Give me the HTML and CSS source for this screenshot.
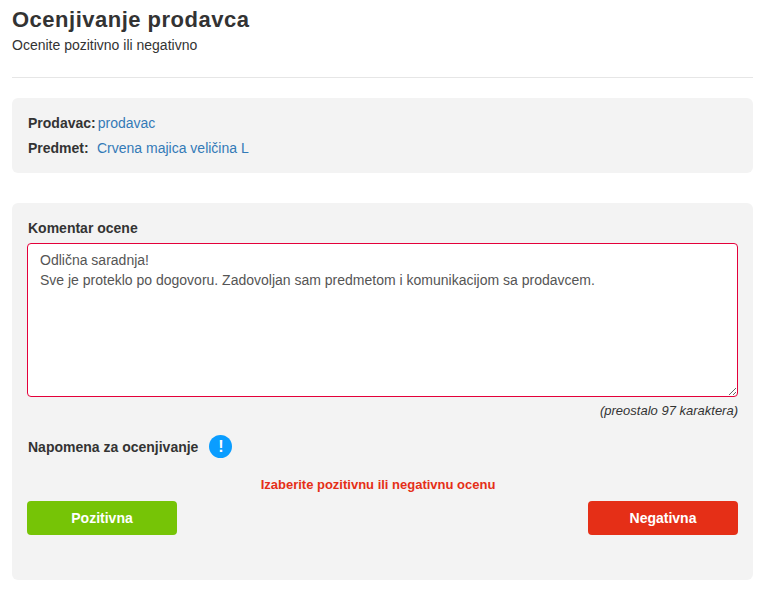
FILE: index.html
```html
<!DOCTYPE html>
<html lang="sr">
<head>
    <meta charset="UTF-8">
    <meta name="viewport" content="width=device-width, initial-scale=1.0">
    <title>Ocenjivanje prodavca</title>
    <link rel="stylesheet" href="styles.css">
</head>
<body>
    <div class="page">
        <div class="page-head">
            <h1>Ocenjivanje prodavca</h1>
            <p>Ocenite pozitivno ili negativno</p>
        </div>

        <div class="box info-box">
            <div class="info-row">
                <span class="info-label">Prodavac:</span>
                <a href="#">prodavac</a>
            </div>
            <div class="info-row">
                <span class="info-label label-wide">Predmet:</span>
                <a href="#">Crvena majica veličina L</a>
            </div>
        </div>

        <form class="box rate-box">
            <label class="field-label" for="comment">Komentar ocene</label>
            <textarea id="comment" class="comment">Odlična saradnja!
Sve je proteklo po dogovoru. Zadovoljan sam predmetom i komunikacijom sa prodavcem.</textarea>
            <div class="chars-left">(preostalo 97 karaktera)</div>

            <div class="note">
                <span class="note-label">Napomena za ocenjivanje</span>
                <span class="note-icon">!</span>
            </div>

            <div class="rate-error">Izaberite pozitivnu ili negativnu ocenu</div>

            <div class="rate-buttons">
                <button type="button" class="btn btn-positive">Pozitivna</button>
                <button type="button" class="btn btn-negative">Negativna</button>
            </div>
        </form>
    </div>
</body>
</html>
```

FILE: styles.css
```css
body {
    margin: 0;
    font-family: "Liberation Sans", Arial, sans-serif;
    font-size: 14px;
    color: #333;
    background: #fff;
}
.page {
    width: 741px;
    margin-left: 12px;
}
.page-head {
    padding-top: 6px;
    padding-bottom: 23px;
    margin-bottom: 20px;
    border-bottom: 1px solid #e6e6e6;
}
h1 {
    margin: 0;
    font-size: 22px;
    line-height: 28px;
    letter-spacing: 0.5px;
    font-weight: bold;
}
.page-head p {
    margin: 3px 0 0;
    line-height: 17px;
}
.box {
    background: #f3f3f3;
    border-radius: 6px;
}
.info-box {
    height: 75px;
    box-sizing: border-box;
    padding: 13px 16px 0;
    margin-bottom: 30px;
}
.info-row {
    display: flex;
    line-height: 25px;
}
.info-label {
    font-weight: bold;
    margin-right: 2px;
}
.label-wide {
    width: 67px;
}
a {
    color: #337ab7;
    text-decoration: none;
}
.rate-box {
    display: block;
    height: 377px;
    box-sizing: border-box;
    padding: 16px 15px 0;
}
.field-label {
    display: block;
    font-weight: bold;
    line-height: 18px;
    margin-left: 1px;
    margin-bottom: 6px;
}
.comment {
    display: block;
    width: 711px;
    height: 154px;
    box-sizing: border-box;
    padding: 6px 12px 4px;
    border: 1px solid #e4003a;
    border-radius: 4px;
    outline: none;
    font-family: inherit;
    font-size: 14px;
    line-height: 20px;
    color: #555;
    background: #fff;
}
.chars-left {
    margin-top: 6px;
    font-size: 13px;
    font-style: italic;
    line-height: 15px;
    text-align: right;
}
.note {
    display: flex;
    align-items: center;
    margin-top: 17px;
    margin-left: 1px;
}
.note-label {
    font-weight: bold;
}
.note-icon {
    width: 23px;
    height: 23px;
    margin-left: 11px;
    border-radius: 50%;
    background: #0a9dff;
    color: #fff;
    font-size: 16px;
    font-weight: bold;
    line-height: 23px;
    text-align: center;
}
.rate-error {
    margin-top: 19px;
    padding-right: 9px;
    font-size: 13px;
    font-weight: bold;
    line-height: 15px;
    color: #e52f17;
    text-align: center;
}
.rate-buttons {
    display: flex;
    justify-content: space-between;
    margin-top: 9px;
}
.btn {
    width: 150px;
    height: 34px;
    padding: 0;
    border: none;
    border-radius: 4px;
    color: #fff;
    font-family: inherit;
    font-size: 14px;
    font-weight: bold;
    cursor: pointer;
}
.btn-positive {
    background: #76c406;
}
.btn-negative {
    background: #e52f17;
}
```
